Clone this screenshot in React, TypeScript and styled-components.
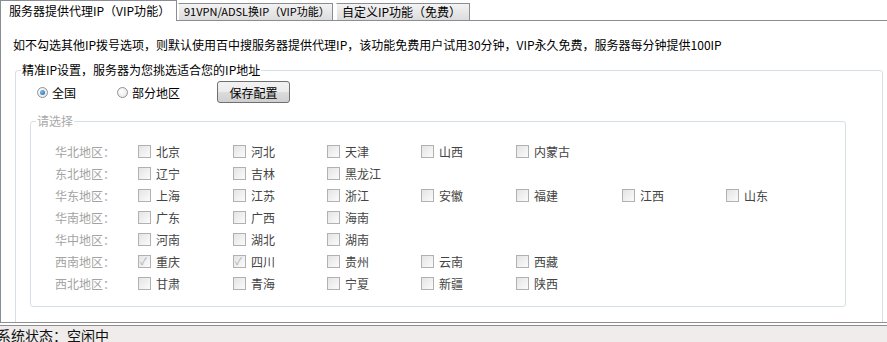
import styled, { createGlobalStyle } from "styled-components";

const GlobalStyle = createGlobalStyle`
  html, body {
    margin: 0;
    padding: 0;
    background: #ffffff;
    overflow: hidden;
  }
  body {
    font-family: "Noto Sans CJK SC", "DejaVu Sans", sans-serif;
    font-size: 12px;
    color: #000;
  }
`;

const Window = styled.div`
  width: 887px;
  height: 342px;
  display: flex;
  flex-direction: column;
  overflow: hidden;
`;

const TabStrip = styled.div`
  height: 20px;
  display: flex;
  align-items: flex-end;
  border-bottom: 1px solid #8a8d94;
  flex-shrink: 0;
`;

const Tab = styled.div<{ $active?: boolean; $width: number; $small?: boolean }>`
  width: ${(p) => p.$width}px;
  box-sizing: border-box;
  height: ${(p) => (p.$active ? 21 : 17)}px;
  margin-bottom: ${(p) => (p.$active ? -1 : 0)}px;
  margin-right: ${(p) => (p.$active ? 1 : 3)}px;
  padding-left: ${(p) => (p.$active ? 8 : 5)}px;
  border: 1px solid #8a8d94;
  border-bottom: none;
  border-left-color: ${(p) => (p.$active ? "#8a8d94" : "#ffffff")};
  background: ${(p) => (p.$active ? "#ffffff" : "linear-gradient(#f3f3f3, #dcdcdc)")};
  font-size: ${(p) => (p.$small ? 11 : 12)}px;
  line-height: ${(p) => (p.$active ? 19 : 15)}px;
  white-space: nowrap;
  overflow: hidden;
  color: #000;
`;

const Panel = styled.div`
  flex: 1;
  min-height: 0;
  overflow: hidden;
  border-left: 1px solid #8a8d94;
  padding: 17px 4px 0 12px;
`;

const Intro = styled.div`
  line-height: 14px;
  white-space: nowrap;
`;

const Group = styled.fieldset<{ $inset: number; $right: number; $bottom: number }>`
  margin: 11px ${(p) => p.$right}px 0 ${(p) => p.$inset}px;
  padding: 0 0 ${(p) => p.$bottom}px 0;
  border: 1px solid #d5dfe5;
  border-radius: 3px;
  min-width: 0;
`;

const Legend = styled.legend<{ $muted?: boolean }>`
  padding: 0 1px;
  margin-left: 5px;
  line-height: 14px;
  color: ${(p) => (p.$muted ? "#a9a9a9" : "#000")};
`;

const ModeRow = styled.div`
  display: flex;
  align-items: center;
  height: 22px;
  margin-top: 4px;
  padding-left: 21px;
`;

const RadioLabel = styled.label<{ $width: number }>`
  display: flex;
  align-items: center;
  gap: 4px;
  width: ${(p) => p.$width}px;
`;

const Radio = styled.span<{ $checked?: boolean }>`
  width: 11px;
  height: 11px;
  box-sizing: border-box;
  border-radius: 50%;
  border: 1px solid #8f9396;
  background: radial-gradient(circle at 40% 40%, #ffffff, #e2e2e2);
  display: flex;
  align-items: center;
  justify-content: center;
  &::after {
    content: "";
    display: ${(p) => (p.$checked ? "block" : "none")};
    width: 5px;
    height: 5px;
    border-radius: 50%;
    background: radial-gradient(circle at 35% 35%, #7cc0f0, #1a5fa6);
  }
`;

const SaveButton = styled.button`
  width: 73px;
  height: 22px;
  margin-left: 0;
  padding: 0;
  font-family: inherit;
  font-size: 12px;
  color: #000;
  border: 1px solid #707070;
  border-radius: 3px;
  background: linear-gradient(#f2f2f2 0%, #ebebeb 50%, #dddddd 51%, #cfcfcf 100%);
`;

const RegionGrid = styled.div`
  display: grid;
  grid-template-columns: 83px 95px 94px 94px 95px 106px 104px auto;
  grid-auto-rows: 22px;
  align-items: center;
  padding: 12px 0 0 24px;
`;

const RegionName = styled.div`
  color: #a3a3a3;
  grid-column: 1;
`;

const City = styled.label`
  display: flex;
  align-items: center;
  gap: 5px;
  color: #444;
  white-space: nowrap;
`;

const Box = styled.span<{ $checked?: boolean }>`
  width: 13px;
  height: 13px;
  box-sizing: border-box;
  border: 1px solid #b1b1b1;
  background: linear-gradient(135deg, #e4e4e4, #fbfbfb);
  position: relative;
  &::after {
    content: "✓";
    display: ${(p) => (p.$checked ? "block" : "none")};
    position: absolute;
    left: 1px;
    top: -3px;
    font-size: 10px;
    color: #a8a8a8;
  }
`;

const Divider = styled.div`
  height: 2px;
  border-top: 1px solid #8f8f8f;
  border-bottom: 1px solid #8f8f8f;
  background: #fff;
  flex-shrink: 0;
`;

const StatusBar = styled.div`
  height: 15px;
  flex-shrink: 0;
  background: #efeceb;
  padding-top: 1px;
  margin-left: -3px;
  font-size: 14px;
  line-height: 16px;
  color: #111;
  white-space: nowrap;
`;

const regions: { name: string; cities: { name: string; checked?: boolean }[] }[] = [
  { name: "华北地区：", cities: [{ name: "北京" }, { name: "河北" }, { name: "天津" }, { name: "山西" }, { name: "内蒙古" }] },
  { name: "东北地区：", cities: [{ name: "辽宁" }, { name: "吉林" }, { name: "黑龙江" }] },
  {
    name: "华东地区：",
    cities: [{ name: "上海" }, { name: "江苏" }, { name: "浙江" }, { name: "安徽" }, { name: "福建" }, { name: "江西" }, { name: "山东" }],
  },
  { name: "华南地区：", cities: [{ name: "广东" }, { name: "广西" }, { name: "海南" }] },
  { name: "华中地区：", cities: [{ name: "河南" }, { name: "湖北" }, { name: "湖南" }] },
  {
    name: "西南地区：",
    cities: [{ name: "重庆", checked: true }, { name: "四川", checked: true }, { name: "贵州" }, { name: "云南" }, { name: "西藏" }],
  },
  { name: "西北地区：", cities: [{ name: "甘肃" }, { name: "青海" }, { name: "宁夏" }, { name: "新疆" }, { name: "陕西" }] },
];

export default function App() {
  return (
    <Window>
      <GlobalStyle />
      <TabStrip>
        <Tab $active $width={177}>服务器提供代理IP（VIP功能）</Tab>
        <Tab $width={155} $small>91VPN/ADSL换IP（VIP功能）</Tab>
        <Tab $width={134}>自定义IP功能（免费）</Tab>
      </TabStrip>
      <Panel>
        <Intro>
          如不勾选其他IP拨号选项，则默认使用百中搜服务器提供代理IP，该功能免费用户试用30分钟，VIP永久免费，服务器每分钟提供100IP
        </Intro>
        <Group $inset={2} $right={0} $bottom={30}>
          <Legend>精准IP设置，服务器为您挑选适合您的IP地址</Legend>
          <ModeRow>
            <RadioLabel $width={80}>
              <Radio $checked />
              全国
            </RadioLabel>
            <RadioLabel $width={100}>
              <Radio />
              部分地区
            </RadioLabel>
            <SaveButton>保存配置</SaveButton>
          </ModeRow>
          <Group $inset={14} $right={36} $bottom={12}>
            <Legend $muted>请选择</Legend>
            <RegionGrid>
              {regions.map((r) => [
                <RegionName key={r.name}>{r.name}</RegionName>,
                ...r.cities.map((c) => (
                  <City key={r.name + c.name}>
                    <Box $checked={c.checked} />
                    {c.name}
                  </City>
                )),
              ])}
            </RegionGrid>
          </Group>
        </Group>
      </Panel>
      <Divider />
      <StatusBar>系统状态：空闲中</StatusBar>
    </Window>
  );
}
